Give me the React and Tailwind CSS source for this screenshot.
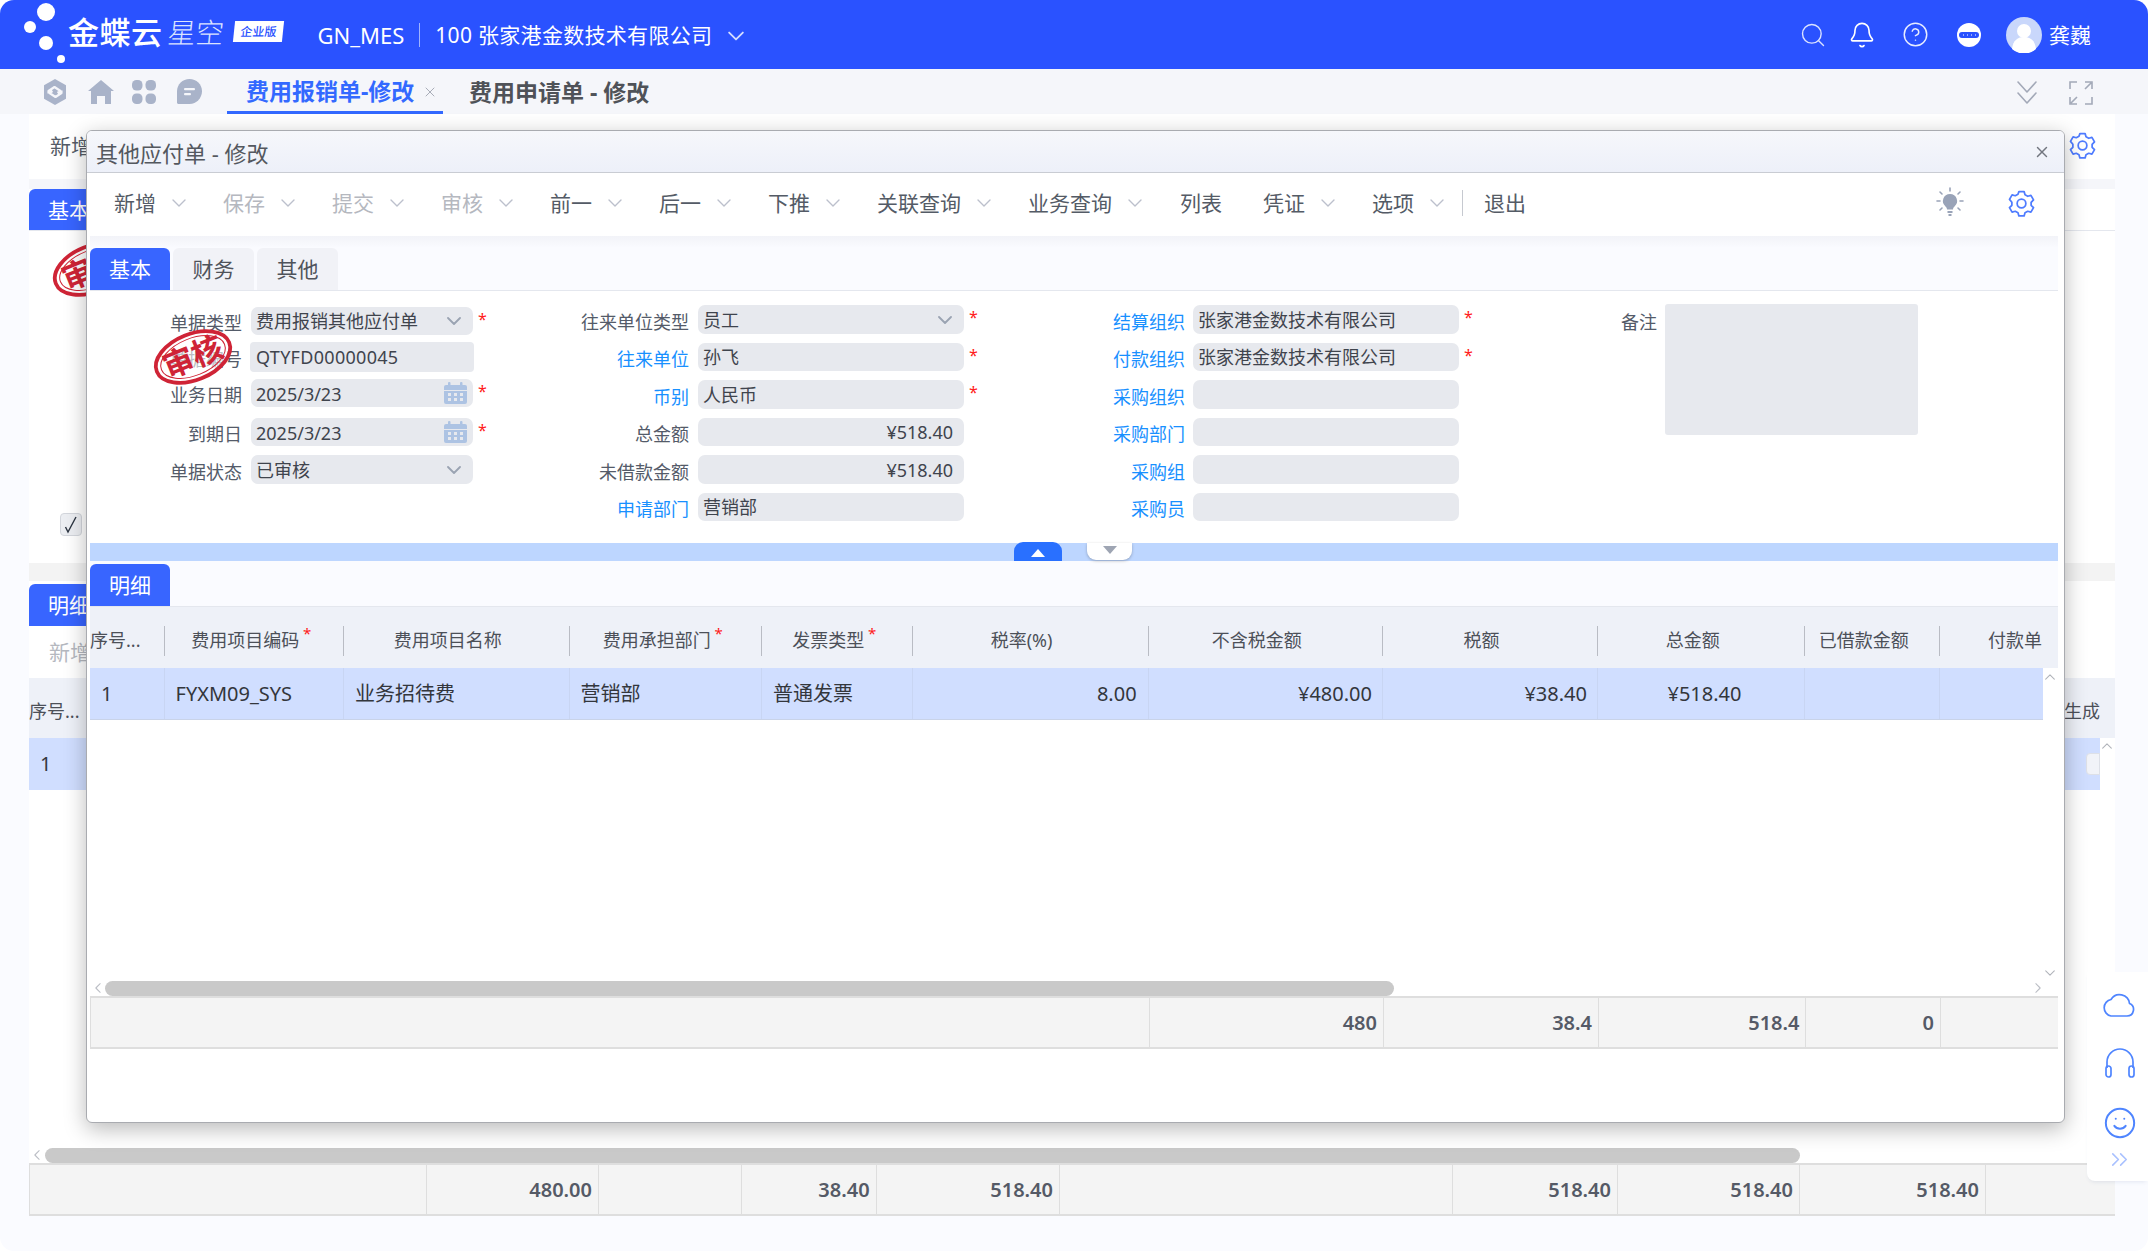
import React from "react";
import { Search, Bell, CircleHelp, Smile, ChevronsRight, X } from "lucide-react";

const Chev = ({ w = 14, h = 8, c = "#bcc0cc", sw = 1.4, className = "" }) => (
  <svg width={w} height={h} viewBox="0 0 14 8" fill="none" className={className}>
    <path d="M1 1l6 6 6-6" stroke={c} strokeWidth={sw} strokeLinecap="round" strokeLinejoin="round" />
  </svg>
);

const Gear = ({ s = 29 }) => (
  <svg width={s} height={s} viewBox="0 0 28 28" fill="none" stroke="#4f7cff" strokeWidth="1.7" strokeLinejoin="round">
    <path d="M11.5 2.5h5l.9 3.1 2.6 1.4 3.1-.8 2.5 4.3-2.3 2.3v2.9l2.3 2.3-2.5 4.3-3.1-.8-2.6 1.4-.9 3.1h-5l-.9-3.1-2.6-1.4-3.1.8-2.5-4.3 2.3-2.3v-2.9L2.4 10l2.5-4.3 3.1.8 2.6-1.4z" />
    <circle cx="14" cy="14" r="4.2" />
  </svg>
);

const Calendar = () => (
  <svg width="25" height="22" viewBox="0 0 25 22" fill="#adc3e3">
    <rect x="5" y="0" width="2.5" height="5" rx="1" />
    <rect x="17" y="0" width="2.5" height="5" rx="1" />
    <path d="M1 5a2 2 0 0 1 2-2h19a2 2 0 0 1 2 2v3H1z" />
    <path fillRule="evenodd" d="M1 9h23v11a2 2 0 0 1-2 2H3a2 2 0 0 1-2-2zm4 2v3h3v-3zm6 0v3h3v-3zm6 0v3h3v-3zM5 16v3h3v-3zm6 0v3h3v-3zm6 0v3h3v-3z" />
  </svg>
);

const Stamp = () => (
  <svg width="92" height="62" viewBox="0 0 92 62">
    <g transform="rotate(-22 46 31)">
      <ellipse cx="46" cy="31" rx="39" ry="23" fill="rgba(255,255,255,0.6)" stroke="#cf2436" strokeWidth="3.8" />
      <ellipse cx="46" cy="31" rx="34" ry="18.5" fill="none" stroke="#cf2436" strokeWidth="1" />
      <text x="46" y="42" textAnchor="middle" fontSize="31" fontWeight="700" fill="#cf2436" fontFamily="'Noto Sans CJK SC',sans-serif">审核</text>
    </g>
  </svg>
);

function Field({ label, blue, value, right, star, sel, cal, h = "h-[28px]", mt = "", rad = "rounded-[7px]", lw, iw, gap = "ml-[9px]", lift = "pt-[4px]", vcl = "" }) {
  return (
    <div className={`flex items-center ${h} ${mt}`}>
      <div className={`${lw} text-right text-[18px] leading-[24px] ${lift} ${blue ? "text-[#1890ff]" : "text-[#545b69]"}`}>{label}</div>
      <div className={`${gap} ${iw} h-full ${rad} bg-[#e7e9ee] flex items-center justify-between px-[5px] text-[18px] leading-[24px] text-[#3f444d] relative`}>
        <span className={`${right ? "ml-auto mr-[6px]" : ""} ${vcl}`}>{value}</span>
        {sel && <Chev c="#9aa3b2" sw={1.8} className="mr-[7px]" />}
        {cal && <span className="flex"><Calendar /></span>}
      </div>
      {star && <span className="ml-[5px] text-[16px] leading-[16px] text-[#ff1a1a] self-start mt-[4px]">*</span>}
    </div>
  );
}

const Tool = ({ t, dis, chev = true, cl = "" }) => (
  <div className={`flex items-center ${cl}`}>
    <span className={`text-[21px] leading-[28px] ${dis ? "text-[#b5b8bf]" : "text-[#545b66]"}`}>{t}</span>
    {chev && <Chev w={14} className="ml-[16px]" />}
  </div>
);

const HCell = ({ t, star, cl = "" }) => (
  <div className={`flex items-center justify-center pr-[18px] pt-[5px] relative ${cl}`}>
    <span className="relative text-[18px] leading-[24px] text-[#4c5058] whitespace-nowrap">
      {t}
      {star && <span className="absolute -right-[12px] -top-[7px] text-[15px] text-[#ff1a1a]">*</span>}
    </span>
    <span className="absolute right-0 top-[19px] h-[30px] w-px bg-[#b9bcc4]" />
  </div>
);

const RCell = ({ t, cl = "" }) => (
  <div className={`flex items-center text-[20px] leading-[28px] text-[#33363c] border-r border-[#c8d5f3] whitespace-nowrap ${cl}`}>{t}</div>
);

const SumCell = ({ t, cl = "" }) => (
  <div className={`flex items-center justify-end pr-[6px] text-[20px] font-semibold leading-[28px] text-[#555a66] border-r border-[#dedede] ${cl}`}>{t}</div>
);

const cols = "grid-cols-[74.5px_179.5px_225.5px_192.5px_150.6px_236px_234.4px_215px_207.5px_134.5px_118px]";

function Modal() {
  return (
    <div className="absolute left-[86px] top-[130px] w-[1979px] h-[993px] rounded-[6px] bg-white border border-[#a9abb0] shadow-[0_6px_22px_rgba(0,0,0,0.28)] flex flex-col overflow-hidden">
      <div className="h-[42px] shrink-0 bg-[linear-gradient(#f6f7fb,#edf0f9)] border-b border-[#c9ccd3] flex items-center justify-between pl-[9px] pr-[13px]">
        <span className="text-[22px] leading-[28px] text-[#54585f] pt-[2px]">其他应付单 - 修改</span>
        <X size={18} color="#72767f" strokeWidth={1.9} />
      </div>
      <div className="h-[63px] shrink-0 flex items-center pl-[27px] pr-[28px] pb-[3px]">
        <div className="flex items-center gap-[37px]">
          <Tool t="新增" />
          <Tool t="保存" dis />
          <Tool t="提交" dis />
          <Tool t="审核" dis />
          <Tool t="前一" />
          <Tool t="后一" />
          <Tool t="下推" />
          <Tool t="关联查询" />
          <Tool t="业务查询" />
          <Tool t="列表" chev={false} cl="ml-[1px]" />
          <Tool t="凭证" cl="ml-[4px]" />
          <Tool t="选项" />
        </div>
        <span className="ml-[18px] h-[26px] w-px bg-[#c6c9d0]" />
        <span className="ml-[21px] text-[21px] leading-[28px] text-[#545b66]">退出</span>
        <div className="ml-auto flex items-center gap-[43px]">
          <svg width="28" height="32" viewBox="0 0 28 32" fill="none">
            <path d="M14 7a7 7 0 0 0-4.5 12.4c.9.8 1.5 1.8 1.5 3.1h6c0-1.3.6-2.3 1.5-3.1A7 7 0 0 0 14 7z" fill="#99a3b8" />
            <rect x="11.5" y="24" width="5" height="2" fill="#99a3b8" />
            <rect x="12.5" y="27" width="3" height="2" fill="#99a3b8" />
            <path d="M14 1v3M4 5l2 2M24 5l-2 2M1 14h3M24 14h3M4 23l2-2M24 23l-2-2" stroke="#99a3b8" strokeWidth="1.6" strokeLinecap="round" />
          </svg>
          <Gear />
        </div>
      </div>
      <div className="h-[55px] shrink-0 ml-[3px] mr-[6px] bg-[linear-gradient(#f2f3f8,#fafbff_12px)] border-b border-[#e4e7ee] flex items-end gap-[3px]">
        <div className="w-[80px] h-[42px] rounded-t-[6px] bg-[#3865ff] text-white text-[21px] leading-[28px] flex items-center justify-center">基本</div>
        <div className="w-[81px] h-[42px] rounded-t-[6px] bg-[#f1f2f7] text-[#4f535b] text-[21px] leading-[28px] flex items-center justify-center">财务</div>
        <div className="w-[81px] h-[42px] rounded-t-[6px] bg-[#f1f2f7] text-[#4f535b] text-[21px] leading-[28px] flex items-center justify-center">其他</div>
      </div>
      <div className="h-[252px] shrink-0 relative flex pl-[3px]">
        <div className="w-[410px] pt-[16px] flex flex-col">
          <Field lw="w-[152px]" iw="w-[222px]" label="单据类型" value="费用报销其他应付单" sel star />
          <Field lw="w-[152px]" iw="w-[224px]" gap="ml-[8px]" h="h-[30px]" mt="mt-[7px]" label="单据编号" value="QTYFD00000045" rad="rounded-[4px]" vcl="tracking-[0.3px] ml-[1px]" />
          <Field lw="w-[152px]" iw="w-[222px]" mt="mt-[7px]" label="业务日期" value="2025/3/23" cal star vcl="pt-[2px]" />
          <Field lw="w-[152px]" iw="w-[222px]" mt="mt-[11px]" label="到期日" value="2025/3/23" cal star vcl="pt-[2px]" />
          <Field lw="w-[152px]" iw="w-[222px]" h="h-[29px]" mt="mt-[9px]" label="单据状态" value="已审核" sel />
        </div>
        <div className="w-[500px] pt-[14px] flex flex-col">
          <Field lw="w-[189px]" iw="w-[266px]" h="h-[29px]" label="往来单位类型" value="员工" sel star />
          <Field lw="w-[189px]" iw="w-[266px]" mt="mt-[9px]" label="往来单位" blue value="孙飞" star />
          <Field lw="w-[189px]" iw="w-[266px]" h="h-[29px]" mt="mt-[9px]" label="币别" blue value="人民币" star />
          <Field lw="w-[189px]" iw="w-[266px]" mt="mt-[9px]" label="总金额" value="¥518.40" right />
          <Field lw="w-[189px]" iw="w-[266px]" h="h-[29px]" mt="mt-[9px]" label="未借款金额" value="¥518.40" right />
          <Field lw="w-[189px]" iw="w-[266px]" mt="mt-[9px]" label="申请部门" blue value="营销部" />
        </div>
        <div className="w-[500px] pt-[14px] flex flex-col">
          <Field lw="w-[185px]" iw="w-[266px]" gap="ml-[8px]" h="h-[29px]" label="结算组织" blue value="张家港金数技术有限公司" star />
          <Field lw="w-[185px]" iw="w-[266px]" gap="ml-[8px]" mt="mt-[9px]" label="付款组织" blue value="张家港金数技术有限公司" star />
          <Field lw="w-[185px]" iw="w-[266px]" gap="ml-[8px]" h="h-[29px]" mt="mt-[9px]" label="采购组织" blue />
          <Field lw="w-[185px]" iw="w-[266px]" gap="ml-[8px]" mt="mt-[9px]" label="采购部门" blue />
          <Field lw="w-[185px]" iw="w-[266px]" gap="ml-[8px]" h="h-[29px]" mt="mt-[9px]" label="采购组" blue />
          <Field lw="w-[185px]" iw="w-[266px]" gap="ml-[8px]" mt="mt-[9px]" label="采购员" blue />
        </div>
        <div className="pt-[13px] flex items-start">
          <div className="w-[157px] text-right text-[18px] leading-[24px] text-[#545b69] pt-[6px]">备注</div>
          <div className="ml-[8px] w-[253px] h-[131px] rounded-[3px] bg-[#e7e9ee]" />
        </div>
        <div className="absolute left-[60px] top-[35px]"><Stamp /></div>
      </div>
      <div className="h-[18px] shrink-0 ml-[3px] mr-[6px] bg-[#bdd6ff] relative">
        <div className="absolute left-[924px] -top-px w-[48px] h-[19px] rounded-t-[9px] bg-[#2970ff] flex items-center justify-center">
          <span className="w-0 h-0 border-x-[7px] border-x-transparent border-b-[8px] border-b-white mt-[3px]" />
        </div>
        <div className="absolute left-[997px] top-0 w-[45px] h-[17px] rounded-b-[9px] bg-white shadow-[0_1px_3px_rgba(0,0,0,0.25)] flex items-center justify-center">
          <span className="w-0 h-0 border-x-[7px] border-x-transparent border-t-[8px] border-t-[#9ea5b3] -mt-[3px]" />
        </div>
      </div>
      <div className="h-[45px] shrink-0 ml-[3px] mr-[6px] bg-[#fafbff] flex items-end">
        <div className="w-[80px] h-[42px] rounded-t-[6px] bg-[#3865ff] text-white text-[21px] leading-[28px] flex items-center justify-center">明细</div>
      </div>
      <div className={`h-[62px] shrink-0 ml-[3px] mr-[6px] bg-[#eef1f8] border-t border-[#e4e7ee] grid ${cols} overflow-hidden`}>
        <div className="flex items-center pt-[5px] relative text-[18px] leading-[24px] text-[#4c5058]">序号...<span className="absolute right-0 top-[19px] h-[30px] w-px bg-[#b9bcc4]" /></div>
        <HCell t="费用项目编码" star />
        <HCell t="费用项目名称" />
        <HCell t="费用承担部门" star />
        <HCell t="发票类型" star />
        <HCell t="税率(%)" />
        <HCell t="不含税金额" />
        <HCell t="税额" />
        <HCell t="总金额" />
        <HCell t="已借款金额" />
        <div className="flex items-center justify-end pt-[5px] pr-[16px] text-[18px] leading-[24px] text-[#4c5058]">付款单</div>
      </div>
      <div className="relative h-[313px] shrink-0 ml-[3px] mr-[6px]">
        <div className="h-[52px] w-[1953px] bg-[#d0deff] border-b border-[#c9d3e8] overflow-hidden">
          <div className={`h-full grid ${cols}`}>
            <RCell t="1" cl="pl-[11px]" />
            <RCell t="FYXM09_SYS" cl="pl-[11px]" />
            <RCell t="业务招待费" cl="pl-[11px]" />
            <RCell t="营销部" cl="pl-[11px]" />
            <RCell t="普通发票" cl="pl-[11px]" />
            <RCell t="8.00" cl="justify-end pr-[11px]" />
            <RCell t="¥480.00" cl="justify-end pr-[10px]" />
            <RCell t="¥38.40" cl="justify-end pr-[10px]" />
            <RCell t="¥518.40" cl="justify-end pr-[63px]" />
            <RCell t="" />
            <div />
          </div>
        </div>
        <Chev w={10} h={6} c="#b0b3ba" sw={1.5} className="absolute left-[1955px] top-[6px] rotate-180" />
        <Chev w={10} h={6} c="#b0b3ba" sw={1.5} className="absolute left-[1955px] top-[302px]" />
      </div>
      <div className="h-[15px] shrink-0 ml-[3px] mr-[6px] flex items-center relative">
        <Chev w={10} h={6} c="#bbbec5" sw={1.5} className="absolute left-[3px] top-[4px] rotate-90" />
        <div className="ml-[15px] w-[1289px] h-full rounded-full bg-[#c9c9c9]" />
        <Chev w={10} h={6} c="#bbbec5" sw={1.5} className="absolute left-[1943px] top-[4px] -rotate-90" />
      </div>
      <div className="h-[53px] shrink-0 ml-[3px] mr-[6px] bg-[#f4f4f4] border-y-2 border-[#dedede] border-l grid grid-cols-[1058.6px_234.4px_215px_207.5px_134.5px_118px]">
        <SumCell t="" />
        <SumCell t="480" />
        <SumCell t="38.4" />
        <SumCell t="518.4" />
        <SumCell t="0" />
        <div />
      </div>
      <div className="flex-1" />
    </div>
  );
}

function Underlay() {
  return (
    <div className="ml-[29px] w-[2086px] h-[1102px] shrink-0 flex flex-col">
      <div className="h-[65px] shrink-0 bg-white flex items-center justify-between pl-[21px] pr-[18px] pb-[2px]">
        <span className="text-[21px] leading-[28px] text-[#545b66] pt-[1px]">新增</span>
        <Gear />
      </div>
      <div className="h-[10px] shrink-0 bg-[#f5f6fa]" />
      <div className="h-[42px] shrink-0 bg-white border-b border-[#e4e7ee] flex">
        <div className="w-[80px] rounded-t-[6px] bg-[#3865ff] text-white text-[21px] leading-[28px] pl-[19px] flex items-center">基本</div>
      </div>
      <div className="h-[332px] shrink-0 bg-white relative">
        <div className="absolute left-[17px] top-[7px]"><Stamp /></div>
        <div className="absolute left-[31px] top-[282px] w-[22px] h-[23px] rounded-[4px] bg-[#eceef2] border border-[#d3d6dc] flex items-center justify-center">
          <svg width="14" height="18" viewBox="0 0 14 18" fill="none" stroke="#2b3440" strokeWidth="1.4">
            <path d="M1.5 11l2.5 5L12 1" />
          </svg>
        </div>
      </div>
      <div className="h-[18px] shrink-0 bg-[#f3f3f3]" />
      <div className="h-[45px] shrink-0 bg-white flex items-end">
        <div className="w-[80px] h-[42px] rounded-t-[6px] bg-[#3865ff] text-white text-[21px] leading-[28px] pl-[19px] flex items-center">明细</div>
      </div>
      <div className="h-[52px] shrink-0 bg-white flex items-center pl-[20px] text-[21px] leading-[28px] text-[#b5b8bf]">新增</div>
      <div className="h-[60px] shrink-0 bg-[#eef1f8] flex items-center justify-between text-[18px] leading-[24px] text-[#4c5058] pt-[6px]">
        <span>序号...</span>
        <span className="whitespace-nowrap mr-[15px]">已生成</span>
      </div>
      <div className="relative h-[410px] shrink-0 bg-white">
        <div className="h-[52px] w-[2071px] bg-[#d0deff] flex items-center justify-between pl-[11px] text-[20px] leading-[28px] text-[#33363c]">
          <span>1</span>
          <span className="w-[14px] h-[22px] rounded-l-[4px] bg-[#f1f3f8] border border-[#dde0e7]" />
        </div>
        <Chev w={10} h={6} c="#b0b3ba" sw={1.5} className="absolute left-[2073px] top-[5px] rotate-180" />
      </div>
      <div className="h-[15px] shrink-0 bg-white flex relative">
        <Chev w={10} h={6} c="#bbbec5" sw={1.5} className="absolute left-[3px] top-[4px] rotate-90" />
        <div className="ml-[16px] w-[1755px] h-full rounded-full bg-[#c9c9c9]" />
      </div>
      <div className="h-[53px] shrink-0 bg-[#f4f4f4] border-y-2 border-[#dedede] border-l grid grid-cols-[397px_172px_143px_134.6px_183.4px_393px_165px_182px_186px_130px]">
        <SumCell t="" />
        <SumCell t="480.00" />
        <SumCell t="" />
        <SumCell t="38.40" />
        <SumCell t="518.40" />
        <SumCell t="" />
        <SumCell t="518.40" />
        <SumCell t="518.40" />
        <SumCell t="518.40" />
        <div />
      </div>
    </div>
  );
}

function Header() {
  return (
    <div className="h-[69px] shrink-0 bg-[#2a52ff] flex items-center text-white relative">
      <div className="relative w-[65px] h-[69px] shrink-0">
        <span className="absolute left-[37px] top-[3px] w-[18px] h-[18px] rounded-full bg-white" />
        <span className="absolute left-[24px] top-[21px] w-[12px] h-[12px] rounded-full bg-white" />
        <span className="absolute left-[39px] top-[36px] w-[14px] h-[14px] rounded-full bg-white" />
        <span className="absolute left-[57px] top-[55px] w-[8px] h-[8px] rounded-full bg-white" />
      </div>
      <span className="ml-[3px] text-[31px] leading-[40px] font-medium tracking-[0.5px] -mt-[6px]">金蝶云</span>
      <span className="ml-[5px] text-[28px] leading-[40px] font-light text-[#dbe3ff] -mt-[6px] -skew-x-6">星空</span>
      <span className="ml-[10px] w-[49px] h-[21px] bg-white text-[#2a52ff] text-[12px] leading-[21px] font-medium text-center -skew-x-6 -mt-[7px]">企业版</span>
      <span className="ml-[35px] text-[22px] leading-[28px]">GN_MES</span>
      <span className="ml-[15px] h-[24px] w-px bg-[#9fb3ff]" />
      <span className="ml-[15px] text-[21px] leading-[28px] tracking-[0.3px] whitespace-nowrap">100 张家港金数技术有限公司</span>
      <Chev w={16} h={10} c="#d4ddff" sw={1.6} className="ml-[16px] mt-[2px]" />
      <div className="ml-auto flex items-center pr-[57px]">
        <Search size={28} strokeWidth={1.2} color="#dbe3ff" />
        <Bell size={28} strokeWidth={1.4} className="ml-[21px]" />
        <CircleHelp size={27} strokeWidth={1.3} className="ml-[26px]" color="#e8edff" />
        <svg width="26" height="26" viewBox="0 0 26 26" className="ml-[27px]">
          <circle cx="13" cy="13" r="12" fill="#fff" />
          <rect x="3" y="10" width="20" height="6" rx="3" fill="#2a52ff" />
          <path d="M7 13h1M11 13h1M15 13h1M19 13h1" stroke="#fff" strokeWidth="1.2" />
        </svg>
        <svg width="36" height="36" viewBox="0 0 36 36" className="ml-[24px]">
          <circle cx="18" cy="18" r="18" fill="#c9d7fb" />
          <circle cx="18" cy="14" r="7" fill="#fff" />
          <path d="M6 32c1-9 6-12 12-12s11 3 12 12a18 18 0 0 1-24 0z" fill="#fff" />
        </svg>
        <span className="ml-[7px] text-[21px] leading-[28px]">龚巍</span>
      </div>
    </div>
  );
}

function TabBar() {
  return (
    <div className="h-[45px] shrink-0 bg-[#f5f6fa] flex items-center relative">
      <svg width="26" height="28" viewBox="0 0 26 28" className="ml-[42px]" fill="none">
        <path d="M13 1l11 6.3v13.4L13 27 2 20.7V7.3z" fill="#a9b3c9" />
        <path d="M6.5 15.5v-2.5l6-4 6 4-3 2M19.5 12.5v2.5l-6 4-6-4 3-2" stroke="#f5f6fa" strokeWidth="2.2" strokeLinejoin="round" />
      </svg>
      <svg width="26" height="24" viewBox="0 0 26 24" className="ml-[20px]" fill="#a9b3c9">
        <path d="M13 0l13 11h-3v13h-6v-8H9v8H3V11H0z" />
      </svg>
      <svg width="24" height="24" viewBox="0 0 24 24" className="ml-[18px]" fill="#a9b3c9">
        <rect x="0" y="0" width="10.5" height="10.5" rx="4.5" />
        <rect x="13.5" y="0" width="10.5" height="10.5" rx="4.5" />
        <rect x="0" y="13.5" width="10.5" height="10.5" rx="4.5" />
        <rect x="13.5" y="13.5" width="10.5" height="10.5" rx="4.5" />
      </svg>
      <svg width="25" height="25" viewBox="0 0 25 25" className="ml-[21px]">
        <path d="M12.5 0C19.4 0 25 5.4 25 12.2S19.4 25 12.5 25H1.5C.7 25 0 24.3 0 23.5V12.2C0 5.4 5.6 0 12.5 0z" fill="#a9b3c9" />
        <rect x="7" y="9" width="11" height="2.2" rx="1" fill="#f5f6fa" />
        <rect x="7" y="14" width="7" height="2.2" rx="1" fill="#f5f6fa" />
      </svg>
      <div className="ml-[25px] w-[216px] h-[45px] border-b-[3px] border-[#3369ff] flex items-center pl-[19px]">
        <span className="text-[23px] leading-[28px] font-bold text-[#3369ff] whitespace-nowrap mt-[2px]">费用报销单-修改</span>
        <X size={16} color="#a9adb8" strokeWidth={1.5} className="ml-[8px] mt-[3px]" />
      </div>
      <span className="ml-[26px] text-[23px] leading-[28px] font-bold text-[#4f5258] whitespace-nowrap">费用申请单 - 修改</span>
      <div className="ml-auto flex items-center pr-[55px] pt-[3px]">
        <svg width="24" height="26" viewBox="0 0 24 26" fill="none" stroke="#a3a9b8" strokeWidth="1.6" strokeLinecap="round" strokeLinejoin="round">
          <path d="M3 2l9 10 9-10M3 13l9 10 9-10" />
        </svg>
        <svg width="24" height="24" viewBox="0 0 24 24" className="ml-[30px]" fill="none" stroke="#a3a9b8" strokeWidth="1.6">
          <path d="M1 8V1h7M16 1h7v7M1 16v7h7M23 16v7h-7M22 2l-6 6M2 22l6-6" />
        </svg>
      </div>
    </div>
  );
}

export default function App() {
  return (
    <div className="w-[2148px] h-[1251px] bg-white overflow-hidden font-['Noto_Sans','Noto_Sans_CJK_SC',sans-serif]">
      <div className="relative w-full h-full rounded-[14px] overflow-hidden bg-[#fafbff] flex flex-col">
        <Header />
        <TabBar />
        <Underlay />
        <Modal />
        <div className="absolute left-[2087px] top-[972px] w-[61px] h-[209px] rounded-bl-[8px] bg-white shadow-[0_3px_4px_-2px_rgba(60,80,140,0.12)] flex flex-col items-center pt-[17px] pl-[2px]">
          <svg width="32" height="28" viewBox="0 0 32 28" fill="none" stroke="#4f85ff" strokeWidth="1.7" strokeLinejoin="round">
            <path d="M8 27h16a6.5 6.5 0 0 0 2.5-12.5A10 10 0 0 0 8 10.5 8.4 8.4 0 0 0 8 27z" />
          </svg>
          <svg width="32" height="30" viewBox="0 0 32 30" fill="none" stroke="#4f85ff" strokeWidth="1.7" className="mt-[31px] ml-[2px]">
            <path d="M3 20v-6a13 13 0 0 1 26 0v6" />
            <rect x="2" y="18" width="5" height="11" rx="2.5" />
            <rect x="25" y="18" width="5" height="11" rx="2.5" />
          </svg>
          <Smile size={34} color="#4f85ff" strokeWidth={1.4} className="mt-[28px] ml-[2px]" />
          <ChevronsRight size={27} color="#a9c1ff" strokeWidth={1.4} className="mt-[6px] ml-[2px]" />
        </div>
      </div>
    </div>
  );
}
